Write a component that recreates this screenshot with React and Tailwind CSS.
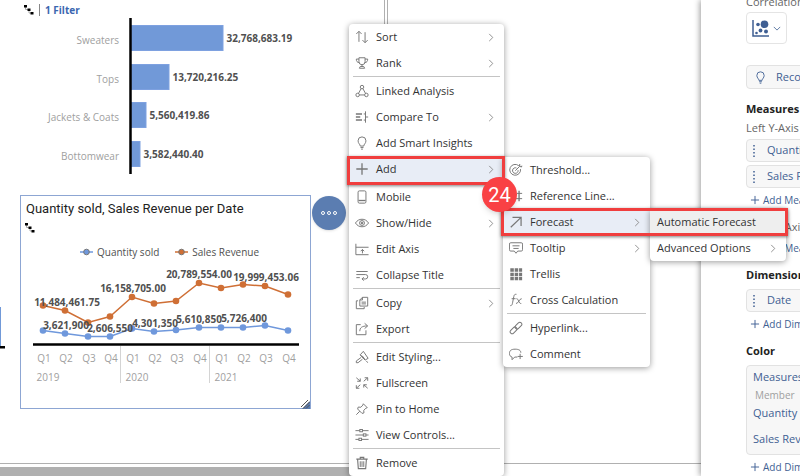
import React from "react";

const ICONS = {
  sort: (
    <>
      <path d="M4.500 13.500V1.500M1.500 4.500l3-3 3 3" />
      <path d="M11.500 2.500v12M8.500 11.500l3 3 3-3" />
    </>
  ),
  rank: (
    <>
      <path d="M4.500 2h7v4.500a3.500 3.500 0 0 1-7 0z" />
      <path d="M4.500 3.500h-3c0 2.500 1 4 3.300 4M11.500 3.500h3c0 2.500-1 4-3.300 4M8 10v2M5 14h6l-1-2H6z" />
    </>
  ),
  linked: (
    <>
      <circle cx="8" cy="3.500" r="2" />
      <circle cx="3" cy="12.500" r="2" />
      <circle cx="13" cy="12.500" r="2" />
      <path d="M7 5.300 4 10.700M9 5.300l3 5.400M5 12.500h6" />
    </>
  ),
  compare: (
    <>
      <path d="M1 4.500h7M1 8h5M1 11.500h7" strokeWidth="1.800" />
      <path d="M12 1.500v13M10 4.500h2M10 11.500h2M12 8h3" />
    </>
  ),
  bulb: (
    <path d="M6 11.500c0-2-2.500-3-2.500-6a4.500 4.500 0 0 1 9 0c0 3-2.500 4-2.500 6zM6.300 13.200h3.400M7 15h2" />
  ),
  add: <path d="M8 1.500v13M1.500 8h13" strokeWidth="1.500" />,
  mobile: (
    <>
      <rect x="3.500" y="1" width="9" height="14" rx="1.500" />
      <path d="M4 12h8" strokeWidth="1.500" />
    </>
  ),
  eye: (
    <>
      <path d="M.5 8C2.500 5 5 3.700 8 3.700S13.500 5 15.500 8c-2 3-4.500 4.300-7.500 4.300S2.500 11 .5 8z" />
      <circle cx="8" cy="8" r="2.800" />
      <circle cx="8" cy="8" r="1" fill="currentColor" />
    </>
  ),
  axis: (
    <>
      <path d="M1 2v12.500H15.500M1 6h14.500" />
      <path d="M8.500 13V8.500M6.500 10.500l2-2 2 2" />
    </>
  ),
  collapse: (
    <path d="M1.500 4h13M1.500 7.500h10.500a2.500 2.500 0 0 1 0 5H8M1.500 11h4M10 10.500l-2 2 2 2" />
  ),
  copy: (
    <>
      <path d="M8.500 1.500h6v10h-9v-7zM8.500 1.500v3h-3" />
      <path d="M3.500 5.500h-2v9h9v-2M7.500 7h5M7.500 9h5" />
    </>
  ),
  export: (
    <>
      <path d="M6.500 3h-5v11.500h11V9.500" />
      <path d="M5.500 10.500c0-4 2.500-6 8.500-6M11 1.500l3.500 3L11 7.500" />
    </>
  ),
  styling: (
    <>
      <path d="M6 5.500 9.500 1.500l5.500 8-3.500 2z" />
      <path d="m8 6.500 3 3.500M7 8.500 1.500 12.500v2h2L8.500 10.500M6 5.500l5.500 6M13 12.500l1.500 2" />
    </>
  ),
  fullscreen: (
    <path d="M1.500 2 6 6M6 2.800V6H2.500M14.500 5.500V2H11M14.500 2 10 6M1.500 10.500V14H5M1.500 14 6 10M14.500 14 10 10M10 13.200V10h3.500" />
  ),
  pin: (
    <path d="m9.500 2 4.500 4.500-1.500.5-2.500 2.500.2 3L8 13 3 8l.7-2.200 3 .2L9 3.500zM5.500 10.500 1.500 14.500" />
  ),
  controls: (
    <>
      <path d="M.5 3h5M8.500 3h7M.5 8h9M12.500 8h3M.5 13h4M7.500 13h8" />
      <rect x="5.500" y="1.700" width="3" height="2.600" />
      <rect x="9.500" y="6.700" width="3" height="2.600" />
      <rect x="4.500" y="11.700" width="3" height="2.600" />
    </>
  ),
  remove: (
    <>
      <path d="M1.500 3.500h13M6 3.500V1.500h4v2M3 4l.8 10.500h8.400L13 4" strokeWidth="1.300" />
      <path d="M6 6v6.500M8 6v6.500M10 6v6.500" />
    </>
  ),
  target: (
    <>
      <path d="M11 3A6.200 6.200 0 1 0 13.200 7" />
      <path d="M8.500 5.700A3.200 3.200 0 1 0 10.400 8.200M7.200 8.800 12 4M12 4l.3-2.500M12 4l3-.3M12.300 1.500 11 3M15 3.700 13.500 5" />
    </>
  ),
  refline: (
    <>
      <path d="M1 11h14M9 5h6" />
      <path d="M5 2v12M11.500 2v12" strokeWidth="1.500" />
    </>
  ),
  forecast: <path d="M2 14 13.500 3M4 2.700h9.800v9.800" strokeWidth="1.400" />,
  tooltip: (
    <>
      <path d="M2 2h12q1.500 0 1.500 1.500v6.500q0 1.500-1.500 1.500h-4L8 14l-2-2.500H2Q.5 11.500.5 10V3.500Q.5 2 2 2z" />
      <path d="M4 5.500h8M5 8.500h6" />
    </>
  ),
  trellis: (
    <path
      stroke="none"
      fill="currentColor"
      d="M1.500 1.500h4v4h-4zM6.500 1.500h4v4h-4zM11.500 1.500h3.500v4h-3.500zM1.500 6.500h4v4h-4zM6.500 6.500h4v4h-4zM11.500 6.500h3.500v4h-3.500zM1.500 11.500h4v3.500h-4zM6.500 11.500h4v3.500h-4zM11.500 11.500h3.500v3.500h-3.500z"
    />
  ),
  fx: (
    <path d="M1.500 14.500c2 0 2.200-1.500 2.700-4L5.500 4c.4-2 1.200-2.700 3-2.500M3 6.500h4.500M8.500 6.500c2.500-.5 2.500 6 5.500 5.500M14.500 6.500c-3 0-3.500 5.500-6.500 5.500" />
  ),
  link: (
    <>
      <rect x="6.300" y="3" width="9" height="4.600" rx="2.300" transform="rotate(-45 10.800 5.300)" />
      <rect x="0.700" y="8.400" width="9" height="4.600" rx="2.300" transform="rotate(-45 5.200 10.700)" />
    </>
  ),
  comment: (
    <path d="M9.500 11.500H6.500L3.500 14.500v-3C1.500 11 .5 9.500.5 7.500c0-3.500 2-5 6.500-5s6.500 1.500 6.500 4M12.700 7.800v6M9.800 10.800h6" />
  ),
};

function Icon({ name, className }) {
  return (
    <svg viewBox="0 0 16 16" fill="none" stroke="currentColor" strokeWidth="1.1" className={className} aria-hidden="true">
      {ICONS[name]}
    </svg>
  );
}

function Chevron({ className }) {
  return (
    <svg viewBox="0 0 6 10" fill="none" stroke="currentColor" className={className} aria-hidden="true">
      <path d="m1 1 4 4-4 4" />
    </svg>
  );
}

const MAIN_MENU = [
  [
    { icon: "sort", label: "Sort", sub: true },
    { icon: "rank", label: "Rank", sub: true },
  ],
  [
    { icon: "linked", label: "Linked Analysis" },
    { icon: "compare", label: "Compare To", sub: true },
    { icon: "bulb", label: "Add Smart Insights" },
    { icon: "add", label: "Add", sub: true, active: true },
  ],
  [
    { icon: "mobile", label: "Mobile" },
    { icon: "eye", label: "Show/Hide", sub: true },
    { icon: "axis", label: "Edit Axis" },
    { icon: "collapse", label: "Collapse Title" },
  ],
  [
    { icon: "copy", label: "Copy", sub: true },
    { icon: "export", label: "Export" },
  ],
  [
    { icon: "styling", label: "Edit Styling..." },
    { icon: "fullscreen", label: "Fullscreen" },
    { icon: "pin", label: "Pin to Home" },
    { icon: "controls", label: "View Controls..." },
  ],
  [{ icon: "remove", label: "Remove" }],
];

const ADD_MENU = [
  [
    { icon: "target", label: "Threshold..." },
    { icon: "refline", label: "Reference Line..." },
    { icon: "forecast", label: "Forecast", sub: true, active: true },
    { icon: "tooltip", label: "Tooltip", sub: true },
    { icon: "trellis", label: "Trellis" },
    { icon: "fx", label: "Cross Calculation" },
  ],
  [
    { icon: "link", label: "Hyperlink..." },
    { icon: "comment", label: "Comment" },
  ],
];

const FORECAST_MENU = [
  [
    { label: "Automatic Forecast", selected: true },
    { label: "Advanced Options", sub: true },
  ],
];

function Menu({ groups, label, className }) {
  return (
    <div role="menu" aria-label={label} className={"absolute rounded bg-white shadow-[0_1px_6px_rgba(0,0,0,0.4)] " + className}>
      {groups.map((items, g) => (
        <div key={g}>
          {g > 0 && <div className="mx-1 h-0.5 border-t border-[#c4c4c4]" />}
          {items.map((item) => (
            <button
              key={item.label}
              type="button"
              role="menuitem"
              className={
                "flex h-[26px] w-full items-center pr-2.5 text-left text-[#333333] " +
                (item.active ? "bg-[#e8edf6]" : item.selected ? "bg-[#eeeeee]" : "bg-transparent")
              }
            >
              {item.icon ? (
                <Icon name={item.icon} className="mr-[7px] ml-1.5 size-[14px] shrink-0 text-[#777777]" />
              ) : (
                <span className="w-[7px]" />
              )}
              <span className="grow">{item.label}</span>
              {item.sub && <Chevron className="h-[9px] w-[6px] text-[#888888]" />}
            </button>
          ))}
        </div>
      ))}
    </div>
  );
}

const BARS = [
  { label: "Sweaters", value: "32,768,683.19", width: 92, y: 25 },
  { label: "Tops", value: "13,720,216.25", width: 38, y: 64 },
  { label: "Jackets & Coats", value: "5,560,419.86", width: 15, y: 102 },
  { label: "Bottomwear", value: "3,582,440.40", width: 9, y: 141 },
];

function BarChart() {
  return (
    <svg viewBox="0 16 384 160" className="block h-40 w-full" role="img" aria-label="Sales by product">
      {BARS.map((b) => (
        <g key={b.label}>
          <text x="119" y={b.y + 19} textAnchor="end" className="fill-[#a0a0a0] text-[10px]">{b.label}</text>
          <rect x="131.500" y={b.y + 0.5} width={b.width - 0.5} height="25" className="fill-[#7199d8] stroke-[#7ea1e0]" />
          <text x={b.width + 134.500} y={b.y + 16.500} className="fill-[#505050] text-[10px] font-bold">{b.value}</text>
        </g>
      ))}
      <path d="M130.500 18v156" className="stroke-black" strokeWidth="2.500" />
    </svg>
  );
}

const XS = [43, 65, 88, 110, 132, 154, 176, 199, 221, 243, 265, 288];
const REVENUE = [305.5, 310.5, 322.5, 316.5, 297, 303.5, 301, 283, 288, 284.5, 286, 294.5];
const QUANTITY = [330.5, 333.5, 336.5, 336.5, 328.5, 331.5, 330, 327.5, 327.5, 327.5, 325.5, 330.5];
const POINT_LABELS = [
  [67, 306, "11,484,461.75"],
  [133, 292, "16,158,705.00"],
  [199, 278, "20,789,554.00"],
  [266, 281, "19,999,453.06"],
  [66, 329, "3,621,900"],
  [110, 332, "2,606,550"],
  [155, 327, "4,301,350"],
  [199, 323, "5,610,850"],
  [244, 322, "5,726,400"],
];

function Series({ ys, line, dot }) {
  return (
    <g>
      <polyline fill="none" strokeWidth="1.500" className={line} points={XS.map((x, i) => x + "," + ys[i]).join(" ")} />
      {XS.map((x, i) => (
        <circle key={x} cx={x} cy={ys[i]} r="3.300" className={dot} />
      ))}
    </g>
  );
}

function LineChart() {
  return (
    <svg viewBox="21 264 288 124" className="block h-[124px] w-full" role="img" aria-label="Quantity sold and sales revenue per quarter">
      <Series ys={REVENUE} line="stroke-[#cf6f35]" dot="fill-[#cf6f35]" />
      <Series ys={QUANTITY} line="stroke-[#6f98dc]" dot="fill-[#6f98dc]" />
      {POINT_LABELS.map(([x, y, text]) => (
        <text key={text} x={x} y={y} textAnchor="middle" className="fill-[#505050] text-[10px] font-bold">{text}</text>
      ))}
      <path d="M33 344.500h266" className="stroke-black" strokeWidth="2.500" />
      <path d="M120.500 346v37M209.500 346v37" className="stroke-[#d4d4d4]" />
      {XS.map((x, i) => (
        <text key={x} x={x + 1} y="362" textAnchor="middle" className="fill-[#a0a0a0] text-[10px]">{"Q" + ((i % 4) + 1)}</text>
      ))}
      {["2019", "2020", "2021"].map((year, i) => (
        <text key={year} x={36.5 + i * 89} y="381" className="fill-[#a0a0a0] text-[10px]">{year}</text>
      ))}
    </svg>
  );
}

function HierarchyIcon() {
  return (
    <svg viewBox="0 0 10 10" className="size-2.5 text-black" aria-hidden="true">
      <path d="M1.500 1v3.500H5V8h3" fill="none" stroke="#aaaaaa" />
      <path fill="currentColor" d="M0 0h3v2.500H0zM3.500 3.500h3v2.500h-3zM6.500 7h3v2.500h-3z" />
    </svg>
  );
}

function LegendItem({ label, color }) {
  return (
    <span className="flex items-center gap-1">
      <svg viewBox="0 0 13 8" className={"h-2 w-[13px] " + color} aria-hidden="true">
        <path d="M0 4h13" stroke="currentColor" strokeWidth="1.500" />
        <circle cx="6.500" cy="4" r="2.800" fill="currentColor" stroke="#777777" />
      </svg>
      {label}
    </span>
  );
}

function ChartCard() {
  return (
    <section className="mx-5 mt-[19px] h-[214px] w-[291px] border border-[#8da6d3] bg-white">
      <h2 className="px-[5px] pt-[3px] font-['Roboto',sans-serif] text-[13px] leading-5 text-[#222222]">Quantity sold, Sales Revenue per Date</h2>
      <div className="px-1 pt-1">
        <HierarchyIcon />
      </div>
      <div className="mt-[11px] flex h-4 items-center gap-4 pl-[59px] text-[10px] text-[#505050]">
        <LegendItem label="Quantity sold" color="text-[#6f98dc]" />
        <LegendItem label="Sales Revenue" color="text-[#cf6f35]" />
      </div>
      <div className="mt-1 w-[288px]">
        <LineChart />
      </div>
      <div className="flex justify-end pt-3">
        <svg viewBox="0 0 9 9" className="size-[9px]" aria-hidden="true">
          <path d="M9 1v8H1z" fill="#5b7db1" />
          <path d="M0 7 7 0M2 8.500 8.500 2M5 8.500 8.500 5" stroke="#555555" />
        </svg>
      </div>
    </section>
  );
}

function Chip({ label }) {
  return (
    <button type="button" className="flex h-[23px] w-full items-center gap-3 rounded-sm border border-[#e2e2e2] bg-[#f7f7f7] pl-1.5 text-[#3f5f93]">
      <svg viewBox="0 0 2 12" className="h-3 w-0.5" aria-hidden="true">
        <path d="M1 0v12" stroke="currentColor" strokeWidth="1.500" strokeDasharray="1.500 2" />
      </svg>
      {label}
    </button>
  );
}

function AddLink({ label }) {
  return (
    <button type="button" className="mt-0.5 flex h-5 items-center gap-[3px] pl-1 text-[10px] text-[#3f5f93]">
      <Icon name="add" className="size-[10px]" />
      {label}
    </button>
  );
}

function BuilderPanel() {
  return (
    <aside className="z-0 w-[99px] shrink-0 overflow-hidden bg-white pl-[45px] whitespace-nowrap text-[#444444] shadow-[-1px_0_6px_rgba(0,0,0,0.4)]">
      <div className="-mt-1.5 w-48">
        <div className="h-[18px] text-[#666666]">Correlation</div>
        <button type="button" aria-label="Chart type" className="flex h-8 w-[41px] items-center justify-center gap-1 rounded-sm border border-[#e4e4e4] bg-white text-[#3f5f93]">
          <svg viewBox="0 0 17 17" className="size-[17px]" aria-hidden="true">
            <path d="M1 0v16h16" fill="none" stroke="currentColor" strokeWidth="1.500" />
            <g fill="currentColor">
              <circle cx="12.500" cy="4.300" r="3.800" />
              <circle cx="6" cy="4.500" r="1.800" />
              <circle cx="8.500" cy="10.500" r="1.900" />
              <circle cx="14" cy="11.500" r="2" />
              <circle cx="4.500" cy="13" r="1.300" />
            </g>
          </svg>
          <svg viewBox="0 0 10 6" className="h-[5px] w-2" aria-hidden="true">
            <path d="m1 1 4 4 4-4" fill="none" stroke="currentColor" />
          </svg>
        </button>
        <button type="button" className="mt-[21px] flex h-6 w-full items-center gap-[9px] rounded-sm border border-[#e2e2e2] bg-[#f7f7f7] pl-[7px] text-[#3f5f93]">
          <Icon name="bulb" className="size-[13px]" />
          Recommended
        </button>
        <h3 className="mt-3 h-4 leading-4 font-bold text-[#222222]">Measures</h3>
        <div className="mt-px flex h-[21px] items-center text-[#666666]">Left Y-Axis</div>
        <div className="flex flex-col gap-[3px]">
          <Chip label="Quantity sold" />
          <Chip label="Sales Revenue" />
        </div>
        <AddLink label="Add Measure" />
        <div className="mt-2 flex h-[18px] items-center text-[#666666]">Right Y-Axis</div>
        <AddLink label="Add Measure" />
        <h3 className="mt-[9px] h-4 leading-4 font-bold text-[#222222]">Dimensions</h3>
        <div className="pt-1.5">
          <Chip label="Date" />
        </div>
        <AddLink label="Add Dimension" />
        <h3 className="mt-[9px] h-4 leading-4 font-bold text-[#222222]">Color</h3>
        <div className="mt-1.5 flex h-[90px] flex-col rounded-sm border border-[#e2e2e2] bg-[#f7f7f7] pl-1.5 text-[#3f5f93]">
          <span className="pt-px leading-5">Measures</span>
          <span className="px-0.5 text-[10px] leading-4 text-[#a0a0a0]">Member</span>
          <span className="leading-5">Quantity sold</span>
          <span className="pt-1.5 leading-5">Sales Revenue</span>
        </div>
        <AddLink label="Add Dimension" />
      </div>
    </aside>
  );
}

export default function App() {
  return (
    <div className="relative flex h-screen overflow-hidden bg-white font-['Open_Sans','Liberation_Sans',sans-serif] text-[11px] text-[#3c3c3c]">
      <main className="flex w-[385px] shrink-0 flex-col">
        <div className="relative grow overflow-hidden border-r border-b border-[#b0b0b0]">
          <header className="flex h-4 items-center gap-[5px] pt-1 pl-6">
            <HierarchyIcon />
            <span className="h-3 w-px bg-[#888888]" />
            <a href="#filter" className="text-[10px] font-bold text-[#3a66b0]">1 Filter</a>
          </header>
          <BarChart />
          <ChartCard />
          <svg viewBox="0 0 5 42" className="absolute top-[307px] left-0 h-[42px] w-[5px]" aria-hidden="true">
            <path d="M0 0h1v39H0z" fill="#7199d8" />
            <path d="M0 39h5v2.500H0z" fill="#000000" />
          </svg>
          <button type="button" aria-label="More actions" className="absolute top-[196px] left-[312px] flex size-[34px] items-center justify-center gap-0.5 rounded-full bg-[#5b7db1] shadow">
            <span className="size-1 rounded-full border border-white" />
            <span className="size-1 rounded-full border border-white" />
            <span className="size-1 rounded-full border border-white" />
          </button>
        </div>
        <div className="mt-[3px] h-[9px] shrink-0 bg-[#b0b0b0]" />
      </main>
      <div className="flex grow flex-col pl-0.5">
        <div className="grow border-b border-l border-[#b0b0b0]" />
        <div className="h-3 shrink-0" />
      </div>
      <BuilderPanel />

      <Menu groups={MAIN_MENU} label="Chart actions" className="top-6 left-[349px] w-[155px]" />
      <Menu groups={ADD_MENU} label="Add" className="top-[157px] left-[503px] w-[147px]" />
      <Menu groups={FORECAST_MENU} label="Forecast" className="top-[209px] left-[650px] w-[136px]" />

      <div className="pointer-events-none absolute top-[156px] left-[347px] h-[29px] w-[158px] border-3 border-[#f03e3e] shadow-[0_1px_3px_rgba(0,0,0,0.5)]" />
      <div className="pointer-events-none absolute top-[208px] left-[501px] h-[28px] w-[287px] border-3 border-[#f03e3e] shadow-[0_1px_3px_rgba(0,0,0,0.5)]" />
      <div className="absolute top-[177px] left-[482px] flex size-[35px] items-center justify-center rounded-full bg-[#f94144] font-['Roboto',sans-serif] text-[20px] text-white shadow-md">24</div>
    </div>
  );
}
